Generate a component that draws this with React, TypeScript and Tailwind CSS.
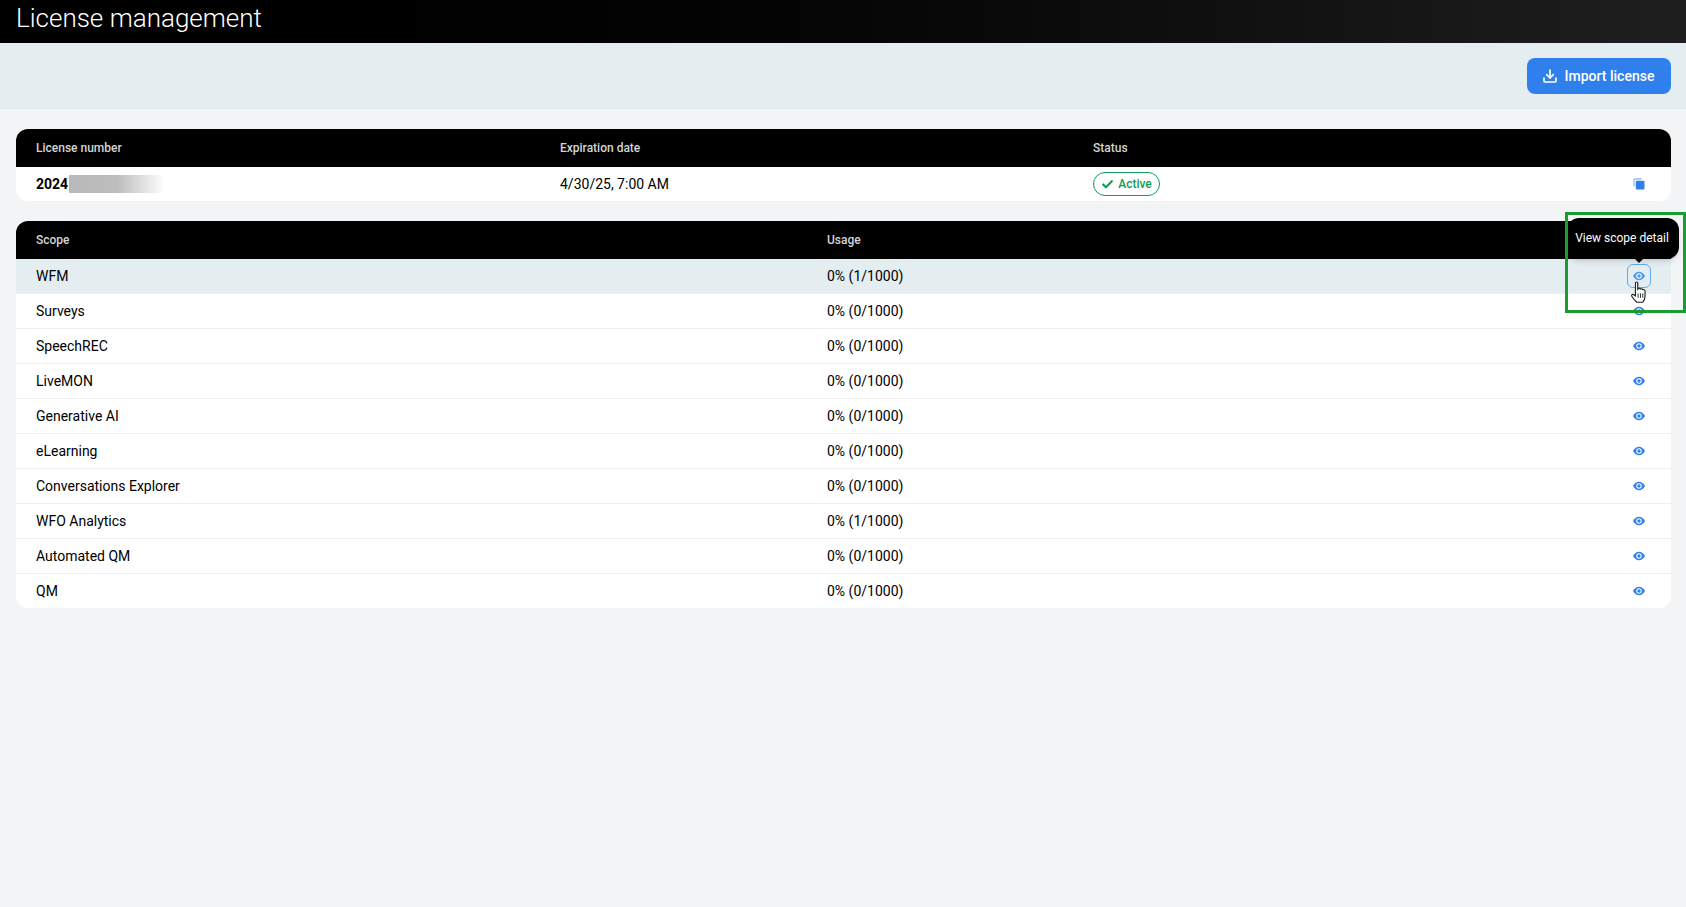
import { Check, Download } from 'lucide-react'

const scopes = [
  { name: 'WFM', usage: '0% (1/1000)' },
  { name: 'Surveys', usage: '0% (0/1000)' },
  { name: 'SpeechREC', usage: '0% (0/1000)' },
  { name: 'LiveMON', usage: '0% (0/1000)' },
  { name: 'Generative AI', usage: '0% (0/1000)' },
  { name: 'eLearning', usage: '0% (0/1000)' },
  { name: 'Conversations Explorer', usage: '0% (0/1000)' },
  { name: 'WFO Analytics', usage: '0% (1/1000)' },
  { name: 'Automated QM', usage: '0% (0/1000)' },
  { name: 'QM', usage: '0% (0/1000)' },
]

function EyeIcon({ color }: { color: string }) {
  return (
    <svg viewBox="0 0 24 24" className="w-3 h-3" fill="none">
      <path d="M0 12c2.800-5.200 6.800-8.500 12-8.500S21.200 6.800 24 12c-2.800 5.200-6.800 8.500-12 8.500S2.800 17.200 0 12z" fill={color} />
      <circle cx="12" cy="12" r="5.500" fill="#fff" />
      <circle cx="12" cy="12" r="3.400" fill={color} />
    </svg>
  )
}

function CopyIcon() {
  return (
    <svg viewBox="0 0 12 12" className="w-3 h-3">
      <path d="M8.500 1H2.200C1.500 1 1 1.500 1 2.200v6.300" fill="none" stroke="#8fbdf6" strokeWidth="1.300" />
      <rect x="2.800" y="2.800" width="8.700" height="8.700" rx="1" fill="#2f80ed" />
    </svg>
  )
}

function HandCursor() {
  return (
    <svg viewBox="0 0 20 26" className="w-[18px] h-[23px]">
      <path
        d="M6 2.500c0-1.800 2.600-1.800 2.600 0V10l.4-1.500c1.500-.8 2.500 0 2.500.8.800-1 2.500-.6 2.500.7 1-.8 2.800-.2 2.800 1.300v6.200c0 3-1.700 5.500-2.600 6.500H7.500C6.500 23 3.500 20 2 17.500c-1-1.700.4-3 1.800-2.200L6 17V2.500z"
        fill="#fff"
        stroke="#222"
        strokeWidth="1.300"
        strokeLinejoin="round"
      />
      <path d="M9 14v5M11.700 14v5M14.300 14v5" stroke="#222" strokeWidth="1" />
    </svg>
  )
}

export default function App() {
  return (
    <div className="min-h-[907px] bg-[#f2f4f6] font-['Roboto',sans-serif] text-[14px] text-black">
      <header className="h-[43px] flex items-center px-4 bg-gradient-to-r from-black to-[#1f1f1f]">
        <h1 className="text-[26px] font-light leading-none text-white pb-2">License management</h1>
      </header>

      <div className="h-[66px] flex items-center justify-end pr-[15px] bg-[#e4edf0] border-b border-[#dfe8eb]">
        <button className="h-9 w-[144px] flex items-center justify-center gap-[7px] pr-0.5 rounded-lg bg-[#2f80ed] text-white font-medium">
          <Download size={16} strokeWidth={2.500} />
          <span className="pt-px">Import license</span>
        </button>
      </div>

      <div className="ml-4 mr-[15px] mt-5 rounded-xl bg-white overflow-hidden">
        <div className="h-[38px] flex items-center bg-black text-[#d4d4d4] text-xs font-medium">
          <div className="w-[524px] ml-5">License number</div>
          <div className="w-[533px]">Expiration date</div>
          <div>Status</div>
        </div>
        <div className="h-[34px] flex items-center">
          <div className="w-[524px] ml-5 flex items-center font-bold">
            2024
            <span className="w-24 h-[18px] ml-px bg-gradient-to-r from-[#b9b9b9] via-[#bdbdbd] to-white" />
          </div>
          <div className="w-[533px]">4/30/25, 7:00 AM</div>
          <div className="flex-1 flex items-center justify-between pr-[26px]">
            <span className="h-6 w-[67px] flex items-center justify-center gap-1 rounded-full border border-[#0f9d58] text-[#0f9d58] text-xs font-medium">
              <Check size={13} strokeWidth={4} />
              Active
            </span>
            <CopyIcon />
          </div>
        </div>
      </div>

      <div className="relative ml-4 mr-[15px] mt-5 rounded-xl bg-white">
        <div className="h-[38px] flex items-center rounded-t-xl bg-black text-[#d4d4d4] text-xs font-medium">
          <div className="w-[791px] ml-5">Scope</div>
          <div>Usage</div>
        </div>
        {scopes.map((s, i) => (
          <div
            key={s.name}
            className={
              i === 0
                ? 'h-[34px] flex items-center bg-[#e4edf0]'
                : 'h-[35px] flex items-center border-t border-[#f0f0f0]'
            }
          >
            <div className="w-[791px] ml-5">{s.name}</div>
            <div className="flex-1">{s.usage}</div>
            <div
              className={
                i === 0
                  ? 'w-6 h-6 mr-5 flex items-center justify-center rounded-md border border-[#63a8f5]'
                  : 'w-6 h-6 mr-5 flex items-center justify-center'
              }
            >
              <EyeIcon color={i === 0 ? '#4d9cf3' : '#2f80ed'} />
            </div>
          </div>
        ))}

        <div className="absolute right-[-8px] top-[-3px] w-[112px] h-[41px] flex items-center justify-center pr-0.5 pb-0.5 rounded-xl bg-black text-white text-xs shadow-md">
          View scope detail
          <span className="absolute left-1/2 -bottom-1 ml-3 w-0 h-0 border-x-4 border-x-transparent border-t-4 border-t-black" />
        </div>
        <div className="absolute left-[1614px] top-[60px]">
          <HandCursor />
        </div>
      </div>

      <div className="absolute left-[1565px] top-[212px] w-[121px] h-[101px] border-[3px] border-[#1a9c2e] pointer-events-none" />
    </div>
  )
}
